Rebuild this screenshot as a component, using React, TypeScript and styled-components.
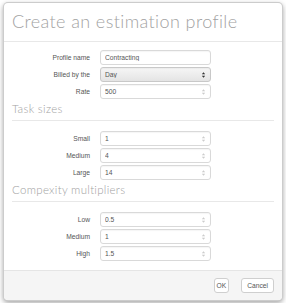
import React from "react";
import styled, { createGlobalStyle } from "styled-components";

const Global = createGlobalStyle`
  html, body { margin: 0; padding: 0; background: #fff; }
  body { font-family: "Liberation Sans", Arial, sans-serif; }
  * { box-sizing: border-box; }
`;

const Dialog = styled.div`
  margin: 2px 3px;
  width: 280px;
  border: 1px solid rgba(0, 0, 0, 0.2);
  border-radius: 5px;
  box-shadow: 0 2px 5px rgba(0, 0, 0, 0.35);
  background: #fff;
  overflow: hidden;
`;

const Header = styled.div`
  height: 39px;
  padding: 7px 8px 0 8px;
  border-bottom: 1px solid #e8e8e8;
`;

const Title = styled.h1`
  margin: 0;
  font-family: Lato, "Open Sans", sans-serif;
  font-weight: 300;
  font-size: 18px;
  line-height: 22px;
  color: #a2a2a2;
  letter-spacing: 0.4px;
`;

const Body = styled.div`
  padding: 8px 8px 9px 8px;
`;

const Section = styled.div`
  display: grid;
  grid-template-columns: 78px 111px;
  column-gap: 10px;
  row-gap: 2px;
  align-items: center;
`;

const Label = styled.label`
  font-size: 6.7px;
  color: #555;
  text-align: right;
`;

const Field = styled.div<{ $select?: boolean }>`
  height: 15px;
  display: flex;
  align-items: center;
  border: 1px solid ${(p) => (p.$select ? "#c8c8c8" : "#d9d9d9")};
  border-radius: 3px;
  background: ${(p) =>
    p.$select ? "linear-gradient(#f6f6f6, #e4e4e4)" : "#fff"};
  box-shadow: inset 0 1px 1px rgba(0, 0, 0, 0.04);
  padding: 0 4px 0 4px;
`;

const Value = styled.input`
  flex: 1;
  min-width: 0;
  border: 0;
  padding: 0;
  background: transparent;
  font-family: "Liberation Sans", Arial, sans-serif;
  font-size: 6.7px;
  color: #555;
  outline: none;
`;

const Legend = styled.div`
  margin-top: 3px;
  margin-bottom: 10px;
  padding-bottom: 4px;
  border-bottom: 1px solid #e8e8e8;
  font-family: Lato, "Open Sans", sans-serif;
  font-weight: 300;
  font-size: 11.5px;
  line-height: 14px;
  color: #a2a2a2;
  letter-spacing: 0.3px;
`;

const Footer = styled.div`
  display: flex;
  justify-content: flex-end;
  gap: 12px;
  padding: 7px 8px 7px 8px;
  background: #f5f5f5;
  border-top: 1px solid #e5e5e5;
`;

const Button = styled.button<{ $narrow?: boolean }>`
  height: 15px;
  padding: 0 ${(p) => (p.$narrow ? "2px" : "5px")};
  border: 1px solid #cfcfcf;
  border-radius: 3px;
  background: #fff;
  font-family: "Liberation Sans", Arial, sans-serif;
  font-size: 6.7px;
  color: #555;
`;

const Spin = ({ dark }: { dark?: boolean }) => (
  <svg width="5" height="8" viewBox="0 0 5 8">
    <path
      d="M0.8 3.2 L2.5 1.2 L4.2 3.2 Z M0.8 4.8 L2.5 6.8 L4.2 4.8 Z"
      fill={dark ? "#333" : "#ccc"}
    />
  </svg>
);

type Row = { label: string; value: string; select?: boolean; number?: boolean };

const Rows = ({ rows }: { rows: Row[] }) => (
  <Section>
    {rows.map((r) => (
      <React.Fragment key={r.label}>
        <Label>{r.label}</Label>
        <Field $select={r.select}>
          <Value readOnly value={r.value} />
          {r.select ? <Spin dark /> : r.number ? <Spin /> : null}
        </Field>
      </React.Fragment>
    ))}
  </Section>
);

export default function App() {
  return (
    <>
      <Global />
      <Dialog>
        <Header>
          <Title>Create an estimation profile</Title>
        </Header>
        <Body>
          <Rows
            rows={[
              { label: "Profile name", value: "Contracting" },
              { label: "Billed by the", value: "Day", select: true },
              { label: "Rate", value: "500", number: true },
            ]}
          />
          <Legend>Task sizes</Legend>
          <Rows
            rows={[
              { label: "Small", value: "1", number: true },
              { label: "Medium", value: "4", number: true },
              { label: "Large", value: "14", number: true },
            ]}
          />
          <Legend>Compexity multipliers</Legend>
          <Rows
            rows={[
              { label: "Low", value: "0.5", number: true },
              { label: "Medium", value: "1", number: true },
              { label: "High", value: "1.5", number: true },
            ]}
          />
        </Body>
        <Footer>
          <Button $narrow>OK</Button>
          <Button>Cancel</Button>
        </Footer>
      </Dialog>
    </>
  );
}
